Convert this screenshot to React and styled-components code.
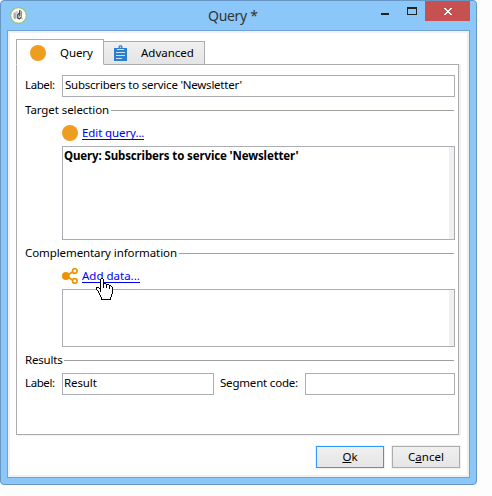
import React from "react";
import styled, { createGlobalStyle } from "styled-components";

const GlobalStyle = createGlobalStyle`
  * { box-sizing: border-box; }
  body {
    margin: 0;
    background: #fdfdfd;
    font: 11.5px/16px "Noto Sans", "Open Sans", sans-serif;
    color: #000;
    overflow: hidden;
  }
`;

const Window = styled.main`
  position: relative;
  width: 477px;
  height: 485px;
  border: 1px solid #6796c4;
  border-radius: 4px;
  background: #8cc7f9;
  padding: 0 6px;
`;
const TitleBar = styled.header`
  height: 29px;
  display: grid;
  grid-template-columns: 201px 1fr 91px;
`;
const LogoSlot = styled.div`
  padding: 6px 0 0 3px;
  svg { display: block; }
`;
const Title = styled.h1`
  margin: 0;
  padding-top: 5px;
  font-size: 14px;
  line-height: 20px;
  font-weight: 400;
  letter-spacing: -0.3px;
  color: #333;
`;
const WindowControls = styled.div`
  display: flex;
  align-items: flex-start;
  svg { display: block; }
`;
const CloseButton = styled.div`
  width: 45px;
  height: 20px;
  margin-left: 7px;
  flex: none;
  background: #c75050;
  padding: 7px 0 0 19px;
`;
const Client = styled.section`
  width: 463px;
  height: 448px;
  border: 1px solid #6fa3d3;
  outline: 2px solid #f0f0f0;
  outline-offset: -3px;
  background: #fff;
  padding: 8px 8px 0;
`;
const TabBar = styled.nav`
  display: flex;
  align-items: flex-end;
  height: 26px;
`;
const Tab = styled.div`
  display: flex;
  gap: 14px;
  border: 1px solid #acacac;
  width: ${(p) => (p.$active ? 88 : 102)}px;
  height: ${(p) => (p.$active ? 26 : 24)}px;
  border-bottom-color: ${(p) => (p.$active ? "#fff" : "#acacac")};
  background: ${(p) => (p.$active ? "#fff" : "linear-gradient(#f0f0f0, #e5e5e5)")};
  margin-left: ${(p) => (p.$active ? 0 : -1)}px;
  padding: ${(p) => (p.$active ? "5px 0 0 13px" : "3px 0 0 10px")};
  z-index: ${(p) => (p.$active ? 1 : 0)};
  svg { flex: none; }
`;
const Panel = styled.div`
  width: 443px;
  height: 371px;
  margin-top: -1px;
  border: 1px solid #acacac;
  box-shadow: 2px 0 0 #f0f0f0, 1px 1px 0 #f0f0f0;
  padding: 10px 0 0 8px;
`;
const Text = styled.span`
  display: block;
  white-space: nowrap;
  letter-spacing: ${(p) => p.$spacing || 0}px;
  font-weight: ${(p) => (p.$bold ? 700 : 400)};
`;
const FieldRow = styled.div`
  display: grid;
  grid-template-columns: ${(p) => p.$columns};
  width: 430px;
  height: 22px;
  margin-top: ${(p) => p.$top || 0}px;
  > span { padding-top: 2px; }
`;
const Field = styled.div`
  height: 22px;
  border: 1px solid #abadb3;
  background: #fff;
  padding: 1px 0 0 ${(p) => p.$inset || 1}px;
`;
const GroupHeading = styled.div`
  display: flex;
  align-items: center;
  gap: 2px;
  width: 429px;
  height: 16px;
  margin-top: ${(p) => p.$top}px;
  &::after {
    content: "";
    flex: 1;
    height: 1px;
    margin-top: 1px;
    background: #a0a0a0;
  }
`;
const GroupLabel = styled.div`
  width: ${(p) => p.$width}px;
`;
const LinkRow = styled.div`
  display: flex;
  gap: 4px;
  margin: 7px 0 0 37px;
  height: 16px;
  svg { display: block; flex: none; }
`;
const Link = styled.a`
  color: #0000f0;
  height: 15px;
  line-height: 16px;
  border-bottom: 1px solid #0000f0;
  letter-spacing: ${(p) => p.$spacing}px;
  white-space: nowrap;
`;
const ListBox = styled.div`
  width: 393px;
  height: ${(p) => p.$height}px;
  margin: 5px 0 0 37px;
  border: 1px solid #abadb3;
  background: linear-gradient(#f0f0f0, #f0f0f0) right / 5px 100% no-repeat #fff;
  padding: 1px;
`;
const Footer = styled.footer`
  display: flex;
  justify-content: flex-end;
  gap: 8px;
  margin-top: 11px;
  padding-right: 1px;
`;
const Button = styled.button`
  width: 68px;
  height: 22px;
  border: 1px solid ${(p) => (p.$primary ? "#3399ff" : "#acacac")};
  box-shadow: 0 0 0 1px #f0f0f0;
  background: linear-gradient(#f0f0f0, #e5e5e5);
  font: inherit;
  color: #000;
  line-height: 16px;
  padding: 0;
  u { text-underline-offset: 1px; text-decoration-skip-ink: none; }
`;
const Pointer = styled.svg`
  position: absolute;
  left: 95px;
  top: 277px;
`;

const Dot = () => (
  <svg width="16" height="16"><circle cx="8" cy="8" r="8" fill="#ee9d20" /></svg>
);
const Clipboard = () => (
  <svg width="13" height="17" viewBox="0 0 13 17">
    <path fill="#2b7fcd" d="M0 3h3v2h7V3h3v13H0z" />
    <path fill="#2b7fcd" fillRule="evenodd" d="M3 4V3h1.5V1.5L5.5.3h2L8.5 1.5V3H10v1zM5.8 1.5v1.3h1.4V1.5z" />
    <path fill="#cfe2f4" d="M3 4h7v1H3zM2 7h9v1H2zM2 10h9v1H2zM2 13h6v1H2z" />
  </svg>
);
const Share = () => (
  <svg width="16" height="16" viewBox="0 0 16 16" fill="none" stroke="#ee9200" strokeWidth="1.7">
    <path d="M4 8l6.5-4M4 8l6.5 4" />
    <circle cx="3.9" cy="8" r="3.9" fill="#ee9200" stroke="none" />
    <circle cx="12.8" cy="3" r="2.3" />
    <circle cx="12.8" cy="13" r="2.3" />
  </svg>
);
const Logo = () => (
  <svg width="17" height="17" viewBox="0 0 17 17">
    <circle cx="8.5" cy="8.5" r="7.8" fill="#fbfbfa" stroke="#91bd56" strokeWidth="1" />
    <path fill="#a9aba7" d="M3.5 6l1.8-.8.7 1v5.3l-1.6.8-.9-1.5z" />
    <path fill="#cdcfcb" d="M5.5 4.5l2-.8.6 1.8-.8 5.5-1.4.8z" />
    <path fill="none" stroke="#3b3d3a" strokeWidth="1.2" d="M9.8 3v6.5M9.5 5.8L7.8 8v3l1.7.8L11 10.5" />
    <path fill="none" stroke="#888" strokeWidth=".9" d="M11.5 4v7l1.3 1" />
  </svg>
);

const HAND = [
  "     ##",
  "    #..#",
  "    #..#",
  "    #..#",
  "    #..#",
  "    #..###",
  "    #..#..###",
  "    #..#..#..##",
  "    #..#..#..#.#",
  "### #..#..#..#..#",
  "#..##........#..#",
  "#...#...........#",
  " #..#...........#",
  "  #.#...........#",
  "  #.............#",
  "   #............#",
  "   #...........#",
  "    #..........#",
  "    #..........#",
  "     #........#",
  "     #........#",
  "     ##########",
];
const pixels = (mark) =>
  HAND.flatMap((row, y) =>
    [...row].map((c, x) => (c === mark ? `M${x} ${y}h1v1h-1z` : ""))
  ).join("");

export default function App() {
  return (
    <>
      <GlobalStyle />
      <Window>
        <TitleBar>
          <LogoSlot><Logo /></LogoSlot>
          <Title>Query *</Title>
          <WindowControls>
            <svg width="39" height="20" shapeRendering="crispEdges">
              <path fill="#222" d="M2 12h8v2H2zM28 6h10v8H28zM29 8v5h8V8z" fillRule="evenodd" />
            </svg>
            <CloseButton>
              <svg width="8" height="7" viewBox="0 0 8 7" shapeRendering="crispEdges">
                <path fill="#fff" d="M0 0h2v1h1v1h2V1h1V0h2v1H7v1H6v1H5v1h1v1h1v1h1v1H6V6H5V5H3v1H2v1H0V6h1V5h1V4h1V3H2V2H1V1H0z" />
              </svg>
            </CloseButton>
          </WindowControls>
        </TitleBar>
        <Client>
          <TabBar>
            <Tab $active><Dot /><Text $spacing={-0.1}>Query</Text></Tab>
            <Tab><Clipboard /><Text>Advanced</Text></Tab>
          </TabBar>
          <Panel>
            <FieldRow $columns="37px 393px">
              <Text $spacing={-0.4}>Label:</Text>
              <Field $inset={2}>
                <Text $spacing={-0.23}>Subscribers to service 'Newsletter'</Text>
              </Field>
            </FieldRow>
            <GroupHeading $top={5}>
              <GroupLabel $width={84}><Text $spacing={-0.08}>Target selection</Text></GroupLabel>
            </GroupHeading>
            <LinkRow><Dot /><Link $spacing={-0.1}>Edit query...</Link></LinkRow>
            <ListBox $height={94}>
              <Text $bold $spacing={-0.13}>Query: Subscribers to service 'Newsletter'</Text>
            </ListBox>
            <GroupHeading $top={5}>
              <GroupLabel $width={152}><Text $spacing={-0.09}>Complementary information</Text></GroupLabel>
            </GroupHeading>
            <LinkRow><Share /><Link $spacing={0}>Add data...</Link></LinkRow>
            <ListBox $height={58} />
            <GroupHeading $top={5}>
              <GroupLabel $width={37}><Text $spacing={-0.18}>Results</Text></GroupLabel>
            </GroupHeading>
            <FieldRow $top={5} $columns="37px 152px 6px 85px 150px">
              <Text $spacing={-0.4}>Label:</Text>
              <Field><Text $spacing={-0.1}>Result</Text></Field>
              <i />
              <Text $spacing={-0.19}>Segment code:</Text>
              <Field />
            </FieldRow>
          </Panel>
          <Footer>
            <Button $primary><u>O</u>k</Button>
            <Button>C<u>a</u>ncel</Button>
          </Footer>
        </Client>
        <Pointer width="17" height="22" shapeRendering="crispEdges">
          <path fill="#fff" d={pixels(".")} />
          <path fill="#000" d={pixels("#")} />
        </Pointer>
      </Window>
    </>
  );
}
